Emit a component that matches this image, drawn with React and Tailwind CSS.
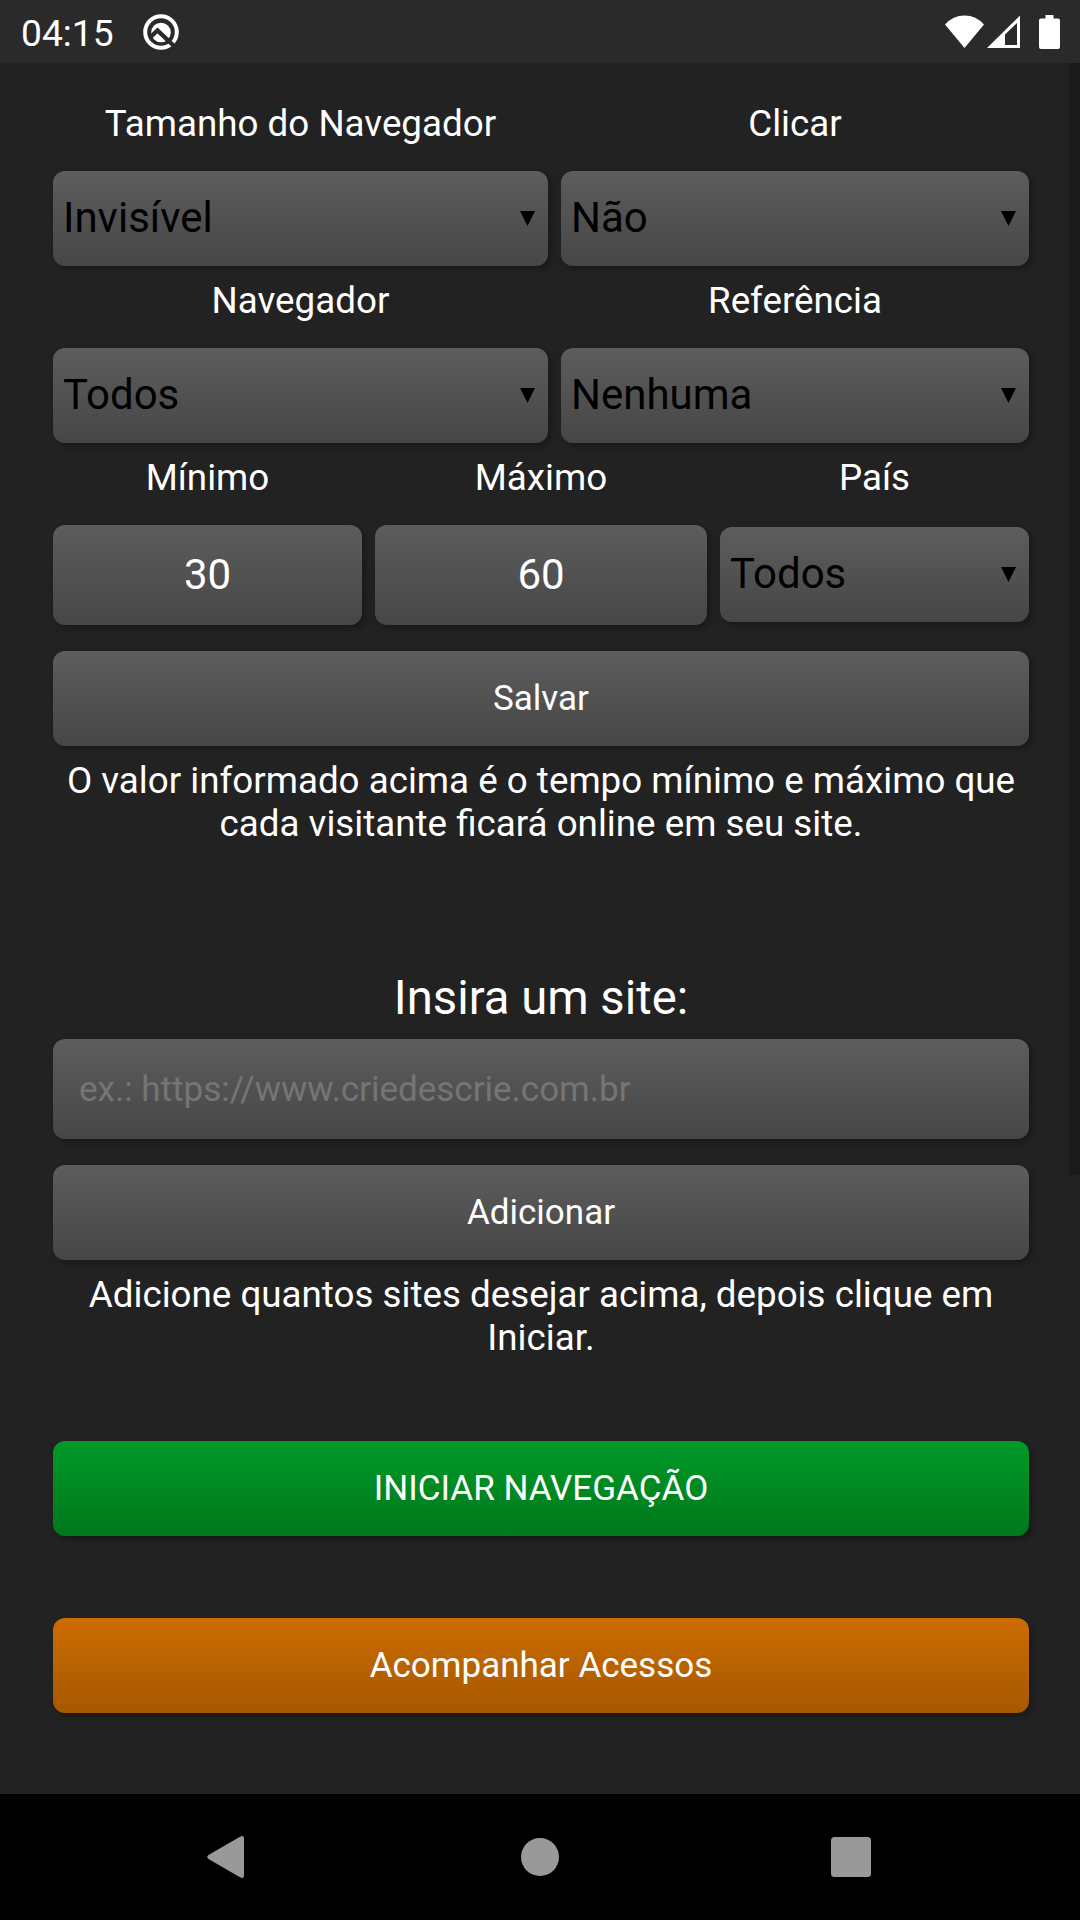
import React, { useState } from 'react';

const SURFACE = 'rounded-[12px] shadow-[3px_3px_6px_rgba(0,0,0,0.3)]';
const GRAY = 'bg-linear-to-b from-[#5d5d5d] to-[#464646]';

const StatusBar = () => (
  <header className="flex h-[63px] items-center bg-[#2a2a2a] pl-[21px] pr-[20px]">
    <span className="w-[122px] pt-[4px] text-[37.2px] leading-[43px] text-white">
      04:15
    </span>
    <svg width="36" height="36" viewBox="0 0 36 36" className="shrink-0">
      <circle cx="18" cy="18" r="15.8" fill="none" stroke="#fff" strokeWidth="4" />
      <circle cx="18" cy="18.5" r="9.8" fill="#fff" />
      <path d="M8 22.5L14.5 16.5L31 32" fill="none" stroke="#2a2a2a" strokeWidth="4.4" />
    </svg>
    <div className="ml-auto flex items-start">
      <svg width="39" height="34" viewBox="0 0 39 34">
        <path d="M0 9.5Q8 .5 19.5 .5Q31 .5 39 9.5L19.5 33Z" fill="#fff" />
      </svg>
      <svg width="33" height="34" viewBox="0 0 33 34" className="ml-[3px]">
        <path
          d="M33 .5V33H0ZM30 8L18 19.5V30H30Z"
          fill="#fff"
          fillRule="evenodd"
        />
      </svg>
      <svg width="21" height="34" viewBox="0 0 21 34" className="ml-[19px]">
        <path
          d="M6.5 0H14.5V3.5H19Q21 3.5 21 5.5V32Q21 34 19 34H2Q0 34 0 32V5.5Q0 3.5 2 3.5H6.5Z"
          fill="#fff"
        />
      </svg>
    </div>
  </header>
);

const Label = ({ children }) => (
  <span className="block h-[82px] pt-[13px] text-center text-[36.75px] leading-[43px] text-white">
    {children}
  </span>
);

const Select = ({ label, options, className, boxClassName = '' }) => (
  <label className={`block ${className}`}>
    <Label>{label}</Label>
    <span className={`relative block ${boxClassName}`}>
      <select
        className={`block h-[95px] w-full appearance-none px-[10px] pb-[2px] text-[42px] leading-[49px] text-black ${SURFACE} ${GRAY}`}
      >
        {options.map((option) => (
          <option key={option}>{option}</option>
        ))}
      </select>
      <svg
        width="15"
        height="15"
        viewBox="0 0 15 15"
        className="pointer-events-none absolute right-[13px] top-[40px]"
      >
        <path d="M0 0H15L7.5 15Z" />
      </svg>
    </span>
  </label>
);

const NumberField = ({ label, initial, className }) => {
  const [value, setValue] = useState(initial);

  return (
    <label className={`block ${className}`}>
      <Label>{label}</Label>
      <input
        value={value}
        onChange={(e) => setValue(e.target.value)}
        className={`block h-[100px] w-full pb-[2px] text-center text-[42px] text-white ${SURFACE} ${GRAY}`}
      />
    </label>
  );
};

const Button = ({ children, className = GRAY }) => (
  <button
    type="button"
    className={`block h-[95px] w-full text-[35px] leading-[41px] text-white ${SURFACE} ${className}`}
  >
    {children}
  </button>
);

const Hint = ({ children }) => (
  <p className="mt-[13px] text-center text-[36.75px] leading-[43px] text-white">
    {children}
  </p>
);

const NavigationBar = () => (
  <footer className="flex h-[126px] items-center bg-black fill-[#999]">
    <svg width="37" height="42" viewBox="0 0 37 42" className="ml-[207px]">
      <path d="M33 .8Q37 -1.5 37 3V39Q37 43.5 33 41.2L1.5 23Q-1 21 1.5 19Z" />
    </svg>
    <svg width="38" height="38" viewBox="0 0 38 38" className="ml-[277px]">
      <circle cx="19" cy="19" r="19" />
    </svg>
    <svg width="40" height="40" viewBox="0 0 40 40" className="ml-[272px]">
      <rect width="40" height="40" rx="3.5" />
    </svg>
  </footer>
);

export default function App() {
  const [site, setSite] = useState('');

  return (
    <div className="flex h-[1920px] w-[1080px] flex-col bg-[#222] font-[Roboto,sans-serif]">
      <StatusBar />
      <div className="flex flex-1 items-start">
        <main className="w-[1069px] pl-[53px] pr-[40px] pt-[26px]">
          <div className="flex gap-[13px]">
            <Select
              label="Tamanho do Navegador"
              options={['Invisível']}
              className="w-[495px]"
            />
            <Select label="Clicar" options={['Não', 'Sim']} className="w-[468px]" />
          </div>
          <div className="flex gap-[13px]">
            <Select label="Navegador" options={['Todos']} className="w-[495px]" />
            <Select label="Referência" options={['Nenhuma']} className="w-[468px]" />
          </div>
          <div className="flex gap-[13px]">
            <NumberField label="Mínimo" initial="30" className="w-[309px]" />
            <NumberField label="Máximo" initial="60" className="w-[332px]" />
            <Select
              label="País"
              options={['Todos']}
              className="w-[309px]"
              boxClassName="mt-[2px]"
            />
          </div>
          <div className="mt-[26px]">
            <Button>Salvar</Button>
          </div>
          <Hint>
            O valor informado acima é o tempo mínimo e máximo que cada visitante
            ficará online em seu site.
          </Hint>

          <h2 className="mt-[126px] text-center text-[47.25px] leading-[55px] text-white">
            Insira um site:
          </h2>
          <input
            value={site}
            onChange={(e) => setSite(e.target.value)}
            placeholder="ex.: https://www.criedescrie.com.br"
            className={`mt-[13px] block h-[100px] w-full px-[26px] text-[35px] text-white placeholder:text-[#757575] ${SURFACE} ${GRAY}`}
          />
          <div className="mt-[26px]">
            <Button>Adicionar</Button>
          </div>
          <Hint>
            Adicione quantos sites desejar acima, depois clique em Iniciar.
          </Hint>

          <div className="mt-[82px] flex flex-col gap-[82px]">
            <Button className="bg-linear-to-b from-[#009a28] to-[#00781c]">
              INICIAR NAVEGAÇÃO
            </Button>
            <Button className="bg-linear-to-b from-[#cc6c00] to-[#a65800]">
              Acompanhar Acessos
            </Button>
          </div>
        </main>
        <div className="h-[1112px] w-[11px] bg-[#1a1a1a]" />
      </div>
      <NavigationBar />
    </div>
  );
}
